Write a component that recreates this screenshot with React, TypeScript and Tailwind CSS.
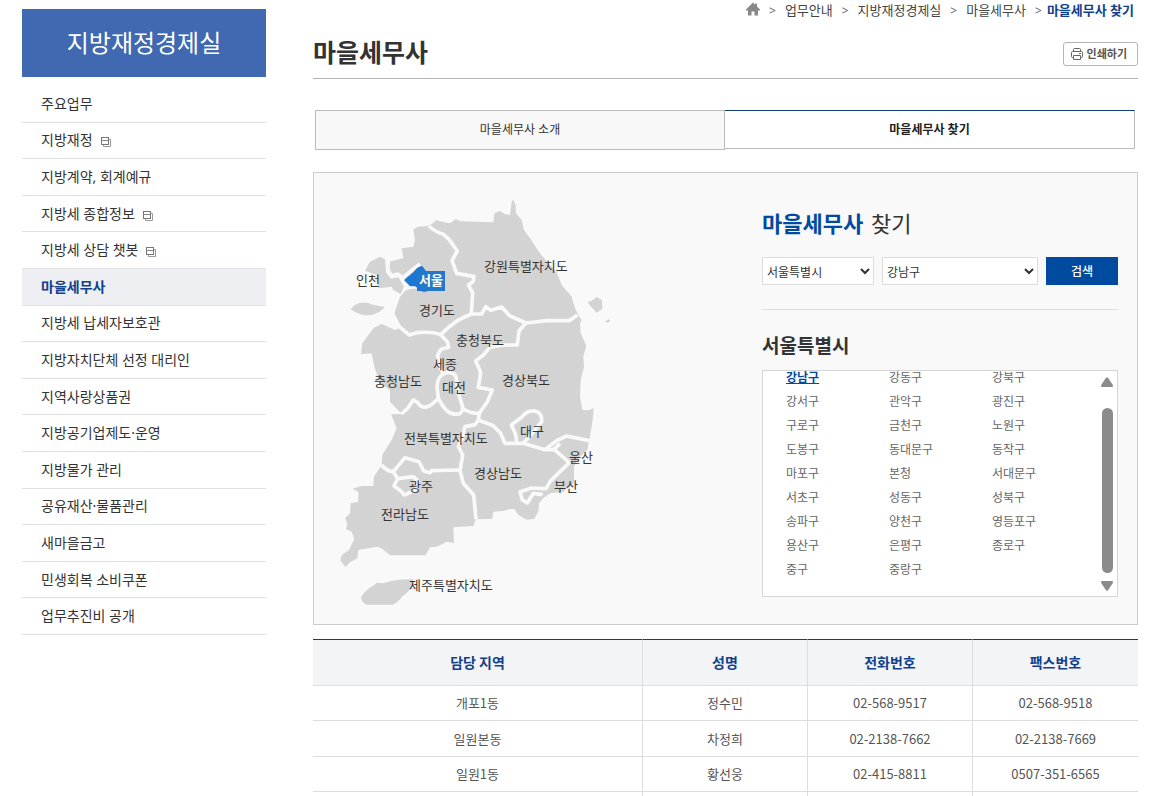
import { clsx } from 'clsx';

const menu = [
  { name: '주요업무' },
  { name: '지방재정', external: true },
  { name: '지방계약, 회계예규' },
  { name: '지방세 종합정보', external: true },
  { name: '지방세 상담 챗봇', external: true },
  { name: '마을세무사', active: true },
  { name: '지방세 납세자보호관' },
  { name: '지방자치단체 선정 대리인' },
  { name: '지역사랑상품권' },
  { name: '지방공기업제도·운영' },
  { name: '지방물가 관리' },
  { name: '공유재산·물품관리' },
  { name: '새마을금고' },
  { name: '민생회복 소비쿠폰' },
  { name: '업무추진비 공개' },
];

const regions = [
  { name: '인천', pos: 'left-[26px] top-[80px]' },
  { name: '강원특별자치도', pos: 'left-[154px] top-[66px]' },
  { name: '경기도', pos: 'left-[89px] top-[110px]' },
  { name: '충청북도', pos: 'left-[126px] top-[140px]' },
  { name: '세종', pos: 'left-[103px] top-[164px]' },
  { name: '충청남도', pos: 'left-[44px] top-[181px]' },
  { name: '대전', pos: 'left-[112px] top-[187px]' },
  { name: '경상북도', pos: 'left-[172px] top-[180px]' },
  { name: '대구', pos: 'left-[190px] top-[231px]' },
  { name: '전북특별자치도', pos: 'left-[74px] top-[238px]' },
  { name: '울산', pos: 'left-[239px] top-[257px]' },
  { name: '경상남도', pos: 'left-[144px] top-[273px]' },
  { name: '광주', pos: 'left-[79px] top-[286px]' },
  { name: '부산', pos: 'left-[224px] top-[286px]' },
  { name: '전라남도', pos: 'left-[51px] top-[314px]' },
  { name: '제주특별자치도', pos: 'left-[79px] top-[385px]' },
];

const districts = [
  '강남구', '강동구', '강북구',
  '강서구', '관악구', '광진구',
  '구로구', '금천구', '노원구',
  '도봉구', '동대문구', '동작구',
  '마포구', '본청', '서대문구',
  '서초구', '성동구', '성북구',
  '송파구', '양천구', '영등포구',
  '용산구', '은평구', '종로구',
  '중구', '중랑구',
];

const people = [
  { area: '개포1동', name: '정수민', tel: '02-568-9517', fax: '02-568-9518' },
  { area: '일원본동', name: '차정희', tel: '02-2138-7662', fax: '02-2138-7669' },
  { area: '일원1동', name: '황선웅', tel: '02-415-8811', fax: '0507-351-6565' },
];

function ExternalIcon() {
  return (
    <svg className="mt-1 h-[10px] w-[10px]" viewBox="0 0 10 10" fill="none" aria-label="새창">
      <path d="M2.5 8V9.5H9.5V2.5H8" stroke="#999" />
      <rect x="0.5" y="0.5" width="7" height="7" fill="#fff" stroke="#777" />
      <path d="M1 3.5H7" stroke="#888" />
    </svg>
  );
}

function Sidebar() {
  return (
    <aside className="w-[244px] shrink-0 pt-[9px] font-['Noto_Sans','Noto_Sans_CJK_KR',sans-serif]">
      <h2 className="flex h-[68px] items-center justify-center bg-[#4069b1] text-2xl text-white">지방재정경제실</h2>
      <ul className="mt-[9px] grid min-h-[549px] auto-rows-fr">
        {menu.map((item) => (
          <li key={item.name} className={clsx('border-b border-[#dfe1e3]', item.active && 'bg-[#edeff3]')}>
            <a
              href="#"
              className={clsx(
                'flex h-full items-center gap-2 pl-[19px] text-sm',
                item.active ? 'font-bold text-[#123f8c]' : 'text-[#333]',
              )}
            >
              {item.name}
              {item.external && <ExternalIcon />}
            </a>
          </li>
        ))}
      </ul>
    </aside>
  );
}

function Breadcrumb() {
  return (
    <nav className="flex h-[22px] items-center justify-end gap-[9px] pr-1 font-['Noto_Sans','Noto_Sans_CJK_KR',sans-serif] text-[13px] text-[#444]">
      <a href="#" aria-label="홈">
        <svg className="mb-1 h-[14px] w-[14px]" viewBox="0 0 14 14" fill="#888">
          <path d="M7 0.5L9.2 2.7V1.5H11V4.5L14 7.5V8.5H12V13.5H8.5V9.5H5.5V13.5H2V8.5H0V7.5Z" />
        </svg>
      </a>
      <span className="text-xs text-[#666]">&gt;</span>
      <a href="#">업무안내</a>
      <span className="text-xs text-[#666]">&gt;</span>
      <a href="#">지방재정경제실</a>
      <span className="text-xs text-[#666]">&gt;</span>
      <a href="#">마을세무사</a>
      <span className="flex items-center gap-[5px]">
        <span className="text-xs text-[#666]">&gt;</span>
        <a href="#" className="font-bold text-[#123f8c]">마을세무사 찾기</a>
      </span>
    </nav>
  );
}

function KoreaMap() {
  return (
    <div className="relative h-[420px] w-[290px]">
      <svg className="h-full w-full" viewBox="0 0 870 1260" aria-hidden="true">
        <g fill="#d3d3d3">
          {/* mainland */}
          <path d="M305 103L318 91L345 97L360 100L377 87L392 94L490 97L493 70L510 63L525 73L540 75L545 35L550 29L557 45L558 70L575 90L582 120L602 147L625 183L652 217L680 247L695 285L725 320L735 355L745 375L755 390L750 400L752 430L769 467L760 500L762 530L752 570L750 620L757 660L775 661L791 655L788 690L778 750L772 780L745 805L732 830L732 880L700 905L660 910L640 925L627 940L625 965L612 987L590 989L565 975L553 957L540 957L520 963L490 965L487 986L437 988L430 1008L370 1012L372 1059L350 1055L320 1070L300 1072L287 1096L180 1096L155 1075L140 1070L85 1080L82 1105L60 1117L47 1131L31 1112L35 1095L57 1080L73 1047L65 1025L48 1018L52 1000L45 985L60 970L62 940L85 935L85 905L67 896L95 888L130 888L132 860L155 825L157 795L172 770L185 750L200 715L183 673L215 672L180 635L180 600L150 580L133 530L125 490L93 493L97 460L130 415L155 402L195 420L215 412L193 370L210 320L225 302L262 288L222 270L205 255L185 258L176 240L178 215L220 204L215 175L250 170L255 150L250 118L265 110L290 108Z" />
          <path d="M105 242L120 215L150 200L165 208L168 247L182 266L205 262L222 290L212 312L190 300L185 290L145 295L140 255Z" />
          <path d="M62 358C75 340 90 336 115 339C130 347 145 347 165 351C155 360 152 366 135 371C115 380 90 378 62 358Z" />
          <path d="M772 336L785 332L800 321L816 330L817 356L800 368L785 352Z" />
          <path d="M824 396L836 388L841 391L835 398Z" />
          <path d="M93 1222Q105 1200 137 1182L138 1178L160 1180Q200 1166 250 1168Q247 1202 216 1220Q203 1238 188 1244H108Q94 1236 93 1222Z" />
        </g>
        {/* province borders */}
        <g fill="none" stroke="#f9f9f9" strokeWidth="11" strokeLinejoin="round">
          <path d="M296 108Q315 125 340 133L357 148L382 183L366 212L380 250L432 260L429 275L415 285L428 308L424 372" />
          <path d="M210 412L238 435L260 428Q305 424 332 434L358 410L385 390L424 372H455L467 350L482 361L515 351L540 378L588 399L650 392H718L742 375" />
          <path d="M588 399L567 422L562 465H520L480 472L460 495L437 513L452 547L445 592L487 600L472 635L448 670L445 690" />
          <path d="M332 434L352 455L356 472L333 478L323 495L326 525L340 550" />
          <path d="M214 672L233 655L250 630L263 638Q285 670 325 625L321 590Q322 555 350 548Q378 545 380 570L382 600L398 650Q398 676 378 672Q350 675 325 625" />
          <path d="M398 655Q418 671 450 670M445 690L490 707L512 730L525 760H580L645 779L680 752L710 738L778 752" />
          <path d="M560 755L556 730L544 705L575 682Q590 660 615 663Q637 667 635 695L600 738L580 760" />
          <path d="M445 690L435 704L405 710L397 745L385 770L398 795L390 841L400 880L431 915L438 988" />
          <path d="M155 825Q170 844 190 845L225 803L267 815L281 843L300 848L305 842L390 840" />
          <path d="M190 845L203 866L250 860L265 875L258 900L222 915L213 903L192 888L203 866" />
          <path d="M645 779L672 778L718 818L690 845L660 875L648 896L605 894L570 905L577 930L592 939L610 910L638 914M672 778L690 760" />
          <path d="M174 213V240L184 257L203 252L219 263L248 238L270 222M219 263L230 292L262 290" />
        </g>
        <path d="M222 270L250 247L262 233L276 227L288 243L290 305H278L255 289H240Z" fill="#1b77d2" />
      </svg>
      {regions.map((region) => (
        <button
          key={region.name}
          className={clsx('absolute h-5 text-[13px] leading-5 whitespace-nowrap text-[#333]', region.pos)}
        >
          {region.name}
        </button>
      ))}
      <button className="absolute top-[81px] left-[87px] h-5 w-7 bg-[#2478cb] pb-0.5 text-center text-[13px] leading-[18px] font-bold text-white">
        서울
      </button>
    </div>
  );
}

function SearchPanel() {
  return (
    <div className="w-[356px] shrink-0 pt-8">
      <h2 className="font-['Noto_Sans','Noto_Sans_CJK_KR',sans-serif] text-[22px] leading-9 text-[#333]">
        <strong className="mr-0.5 font-bold text-[#004a9f]">마을세무사</strong> 찾기
      </h2>
      <form className="mt-4 flex gap-2 border-b border-[#ddd] pb-6" onSubmit={(e) => e.preventDefault()}>
        <select aria-label="시도" className="h-7 w-28 border border-[#ddd] bg-white text-xs text-[#333]">
          <option>서울특별시</option>
        </select>
        <select aria-label="시군구" className="h-7 flex-1 border border-[#ddd] bg-white text-xs text-[#333]">
          <option>강남구</option>
        </select>
        <button className="h-7 w-[72px] bg-[#004a9f] text-xs font-medium text-white">검색</button>
      </form>
      <h3 className="mt-5 text-[19px] leading-[30px] font-bold text-[#333]">서울특별시</h3>
      <div className="mt-[10px] flex h-[227px] border border-[#d5d5d5] bg-white">
        <ul className="-mt-[6px] grid flex-1 auto-rows-[24px] grid-cols-3 pr-0.5 pl-[23px] text-xs leading-6 text-[#666]">
          {districts.map((name, idx) => (
            <li key={name}>
              <a href="#" className={clsx(idx === 0 && 'font-bold text-[#004a9f] underline')}>
                {name}
              </a>
            </li>
          ))}
        </ul>
        <div className="flex w-5 shrink-0 flex-col items-center pt-[6px] pb-[5px]" aria-hidden="true">
          <svg className="h-[10px] w-3" viewBox="0 0 12 10" fill="#8b8b8b">
            <path d="M5 0.8Q6 -0.4 7 0.8L11.8 8Q12.4 10 11 10H1Q-0.4 10 0.2 8Z" />
          </svg>
          <div className="mt-[21px] mb-2 w-[11px] flex-1 rounded-full bg-[#8b8b8b]" />
          <svg className="h-[10px] w-3" viewBox="0 0 12 10" fill="#8b8b8b">
            <path d="M5 9.2Q6 10.4 7 9.2L11.8 2Q12.4 0 11 0H1Q-0.4 0 0.2 2Z" />
          </svg>
        </div>
      </div>
    </div>
  );
}

function TaxTable() {
  return (
    <table className="mt-[14px] w-full table-fixed border-separate border-spacing-0 text-center text-[13px] text-[#555]">
      <thead className="bg-[#f2f4f6] text-sm text-[#123f8c]">
        <tr className="h-[47px]">
          <th className="w-2/5 border-t border-r border-b border-t-[#123f7c] border-r-[#ddd] border-b-[#ddd] pb-0.5">담당 지역</th>
          <th className="w-1/5 border-t border-r border-b border-t-[#123f7c] border-r-[#ddd] border-b-[#ddd] pb-0.5">성명</th>
          <th className="w-1/5 border-t border-r border-b border-t-[#123f7c] border-r-[#ddd] border-b-[#ddd] pb-0.5">전화번호</th>
          <th className="w-1/5 border-t border-b border-t-[#123f7c] border-b-[#ddd] pb-0.5">팩스번호</th>
        </tr>
      </thead>
      <tbody>
        {people.map((p) => (
          <tr key={p.area} className="odd:h-[35px] even:h-9">
            <td className="border-r border-b border-[#ddd]">{p.area}</td>
            <td className="border-r border-b border-[#ddd]">{p.name}</td>
            <td className="border-r border-b border-[#ddd]">{p.tel}</td>
            <td className="border-b border-[#ddd]">{p.fax}</td>
          </tr>
        ))}
        <tr className="h-1">
          <td className="border-r border-[#ddd]" />
          <td className="border-r border-[#ddd]" />
          <td className="border-r border-[#ddd]" />
          <td />
        </tr>
      </tbody>
    </table>
  );
}

export default function App() {
  return (
    <div className="flex gap-[47px] bg-white pr-6 pl-[22px] font-['Noto_Sans_CJK_KR',sans-serif]">
      <Sidebar />
      <main className="min-w-0 flex-1">
        <Breadcrumb />
        <div className="flex h-[57px] items-center justify-between border-b border-[#b5b5b5]">
          <h1 className="pt-0.5 text-[25px] leading-10 font-bold text-[#333]">마을세무사</h1>
          <button className="mt-[7px] flex h-6 items-center gap-1 rounded-[3px] border border-[#b5b5b5] pr-[10px] pl-[7px] text-[11px] font-bold text-[#555]">
            <svg className="h-3 w-3" viewBox="0 0 12 12" fill="none" stroke="#666">
              <path d="M2.5 3.5V1.5Q2.5 0.5 3.5 0.5H8.5Q9.5 0.5 9.5 1.5V3.5M2.5 9.5H1.5Q0.5 9.5 0.5 8.5V4.5Q0.5 3.5 1.5 3.5H10.5Q11.5 3.5 11.5 4.5V8.5Q11.5 9.5 10.5 9.5H9.5" />
              <path d="M2.5 7.5H9.5V11.5H2.5ZM8 5.5H10" />
            </svg>
            인쇄하기
          </button>
        </div>
        <div className="mt-[31px] flex items-start pr-[3px] pl-[2px] font-['Noto_Sans','Noto_Sans_CJK_KR',sans-serif] text-xs">
          <a href="#" className="flex h-10 w-1/2 items-center justify-center border border-[#bbb] bg-[#f8f8f8] text-[#333]">
            마을세무사 소개
          </a>
          <a
            href="#"
            className="flex h-[39px] w-1/2 items-center justify-center border-t border-r border-b border-[#bbb] border-t-[#123f7c] font-bold text-[#222]"
          >
            마을세무사 찾기
          </a>
        </div>
        <section className="mt-[22px] flex justify-between border border-[#ccc] bg-[#f9f9f9] pr-[19px] pb-[14px] pl-4">
          <div className="pt-[17px]">
            <KoreaMap />
          </div>
          <SearchPanel />
        </section>
        <TaxTable />
      </main>
    </div>
  );
}
